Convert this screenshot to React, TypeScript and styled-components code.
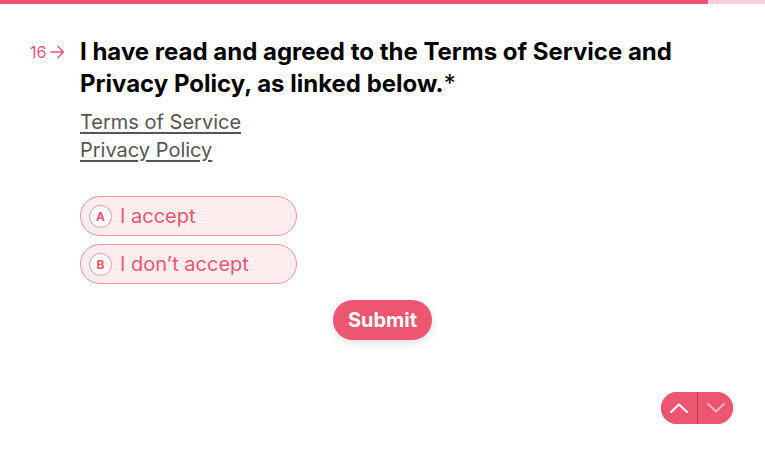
import styled, { createGlobalStyle } from 'styled-components';

const pink = '#EC5670';

const GlobalStyle = createGlobalStyle`
  html, body { margin: 0; padding: 0; background: #fff; }
  body { font-family: Inter, "Noto Sans", sans-serif; }
`;

const Page = styled.div`
  position: relative;
  width: 765px;
  height: 456px;
  overflow: hidden;
`;

const Progress = styled.div`
  height: 4px;
  background: #fbd0d8;
`;

const ProgressFill = styled.div`
  height: 100%;
  background: ${pink};
`;

const Body = styled.div`
  display: flex;
  padding: 32px 0 0 30px;
`;

const Number = styled.div`
  width: 50px;
  display: flex;
  align-items: center;
  gap: 4px;
  color: ${pink};
  font-size: 16px;
  height: 32px;
`;

const Content = styled.div`
  display: flex;
  flex-direction: column;
`;

const Title = styled.h1`
  margin: 0;
  font-size: 24px;
  font-weight: 700;
  line-height: 32px;
  color: #000;
  width: 620px;
`;

const Star = styled.span`
  font-weight: 400;
`;

const Links = styled.div`
  display: flex;
  flex-direction: column;
  align-items: flex-start;
  margin-top: 8px;
`;

const LinkText = styled.a`
  font-size: 20px;
  line-height: 28px;
  color: #555;
  text-decoration: underline;
  text-underline-offset: 3px;
  text-decoration-thickness: 1.5px;
`;

const Options = styled.div`
  display: flex;
  flex-direction: column;
  gap: 8px;
  margin-top: 32px;
`;

const Option = styled.div`
  box-sizing: border-box;
  width: 217px;
  height: 40px;
  border: 1px solid #f4939f;
  border-radius: 20px;
  background: #fdedef;
  display: flex;
  align-items: center;
  padding-left: 8px;
  gap: 8px;
  color: ${pink};
  font-size: 20px;
`;

const Key = styled.span`
  box-sizing: border-box;
  width: 23px;
  height: 23px;
  border-radius: 50%;
  border: 1px solid #f4939f;
  background: #fff;
  display: flex;
  align-items: center;
  justify-content: center;
  font-size: 12px;
  font-weight: 700;
  color: ${pink};
`;

const SubmitRow = styled.div`
  display: flex;
  justify-content: center;
  margin-top: 16px;
  width: 605px;
`;

const Submit = styled.button`
  height: 40px;
  padding: 0 15px;
  border: none;
  border-radius: 20px;
  background: ${pink};
  color: #fff;
  font-family: Inter, sans-serif;
  font-size: 20px;
  font-weight: 700;
  box-shadow: 0 3px 10px rgba(0, 0, 0, 0.12);
`;

const Nav = styled.div`
  position: absolute;
  right: 32px;
  bottom: 32px;
  display: flex;
  border-radius: 16px;
  overflow: hidden;
  background: ${pink};
`;

const NavButton = styled.button<{ $dim?: boolean }>`
  width: 36px;
  height: 32px;
  border: none;
  background: ${pink};
  display: flex;
  align-items: center;
  justify-content: center;
  padding: 0;
  & + & { border-left: 1px solid #b83a50; }
  svg { opacity: ${(p) => (p.$dim ? 0.55 : 1)}; }
`;

const Chevron = ({ up }: { up?: boolean }) => (
  <svg width="18" height="10" viewBox="0 0 18 10" fill="none">
    <path
      d={up ? 'M1 9 L9 1.5 L17 9' : 'M1 1 L9 8.5 L17 1'}
      stroke="#fff"
      strokeWidth="2"
      strokeLinecap="round"
      strokeLinejoin="round"
    />
  </svg>
);

export default function App() {
  return (
    <Page>
      <GlobalStyle />
      <Progress>
        <ProgressFill style={{ width: '708px' }} />
      </Progress>
      <Body>
        <Number>
          16
          <svg width="15" height="14" viewBox="0 0 15 14" fill="none">
            <path d="M1 7 H13.5 M8 1.5 L13.5 7 L8 12.5" stroke={pink} strokeWidth="1.4" strokeLinecap="round" strokeLinejoin="round" />
          </svg>
        </Number>
        <Content>
          <Title>
            I have read and agreed to the Terms of Service and Privacy Policy, as linked below.<Star>*</Star>
          </Title>
          <Links>
            <LinkText>Terms of Service</LinkText>
            <LinkText>Privacy Policy</LinkText>
          </Links>
          <Options>
            <Option>
              <Key>A</Key>I accept
            </Option>
            <Option>
              <Key>B</Key>I don’t accept
            </Option>
          </Options>
          <SubmitRow>
            <Submit>Submit</Submit>
          </SubmitRow>
        </Content>
      </Body>
      <Nav>
        <NavButton>
          <Chevron up />
        </NavButton>
        <NavButton $dim>
          <Chevron />
        </NavButton>
      </Nav>
    </Page>
  );
}
